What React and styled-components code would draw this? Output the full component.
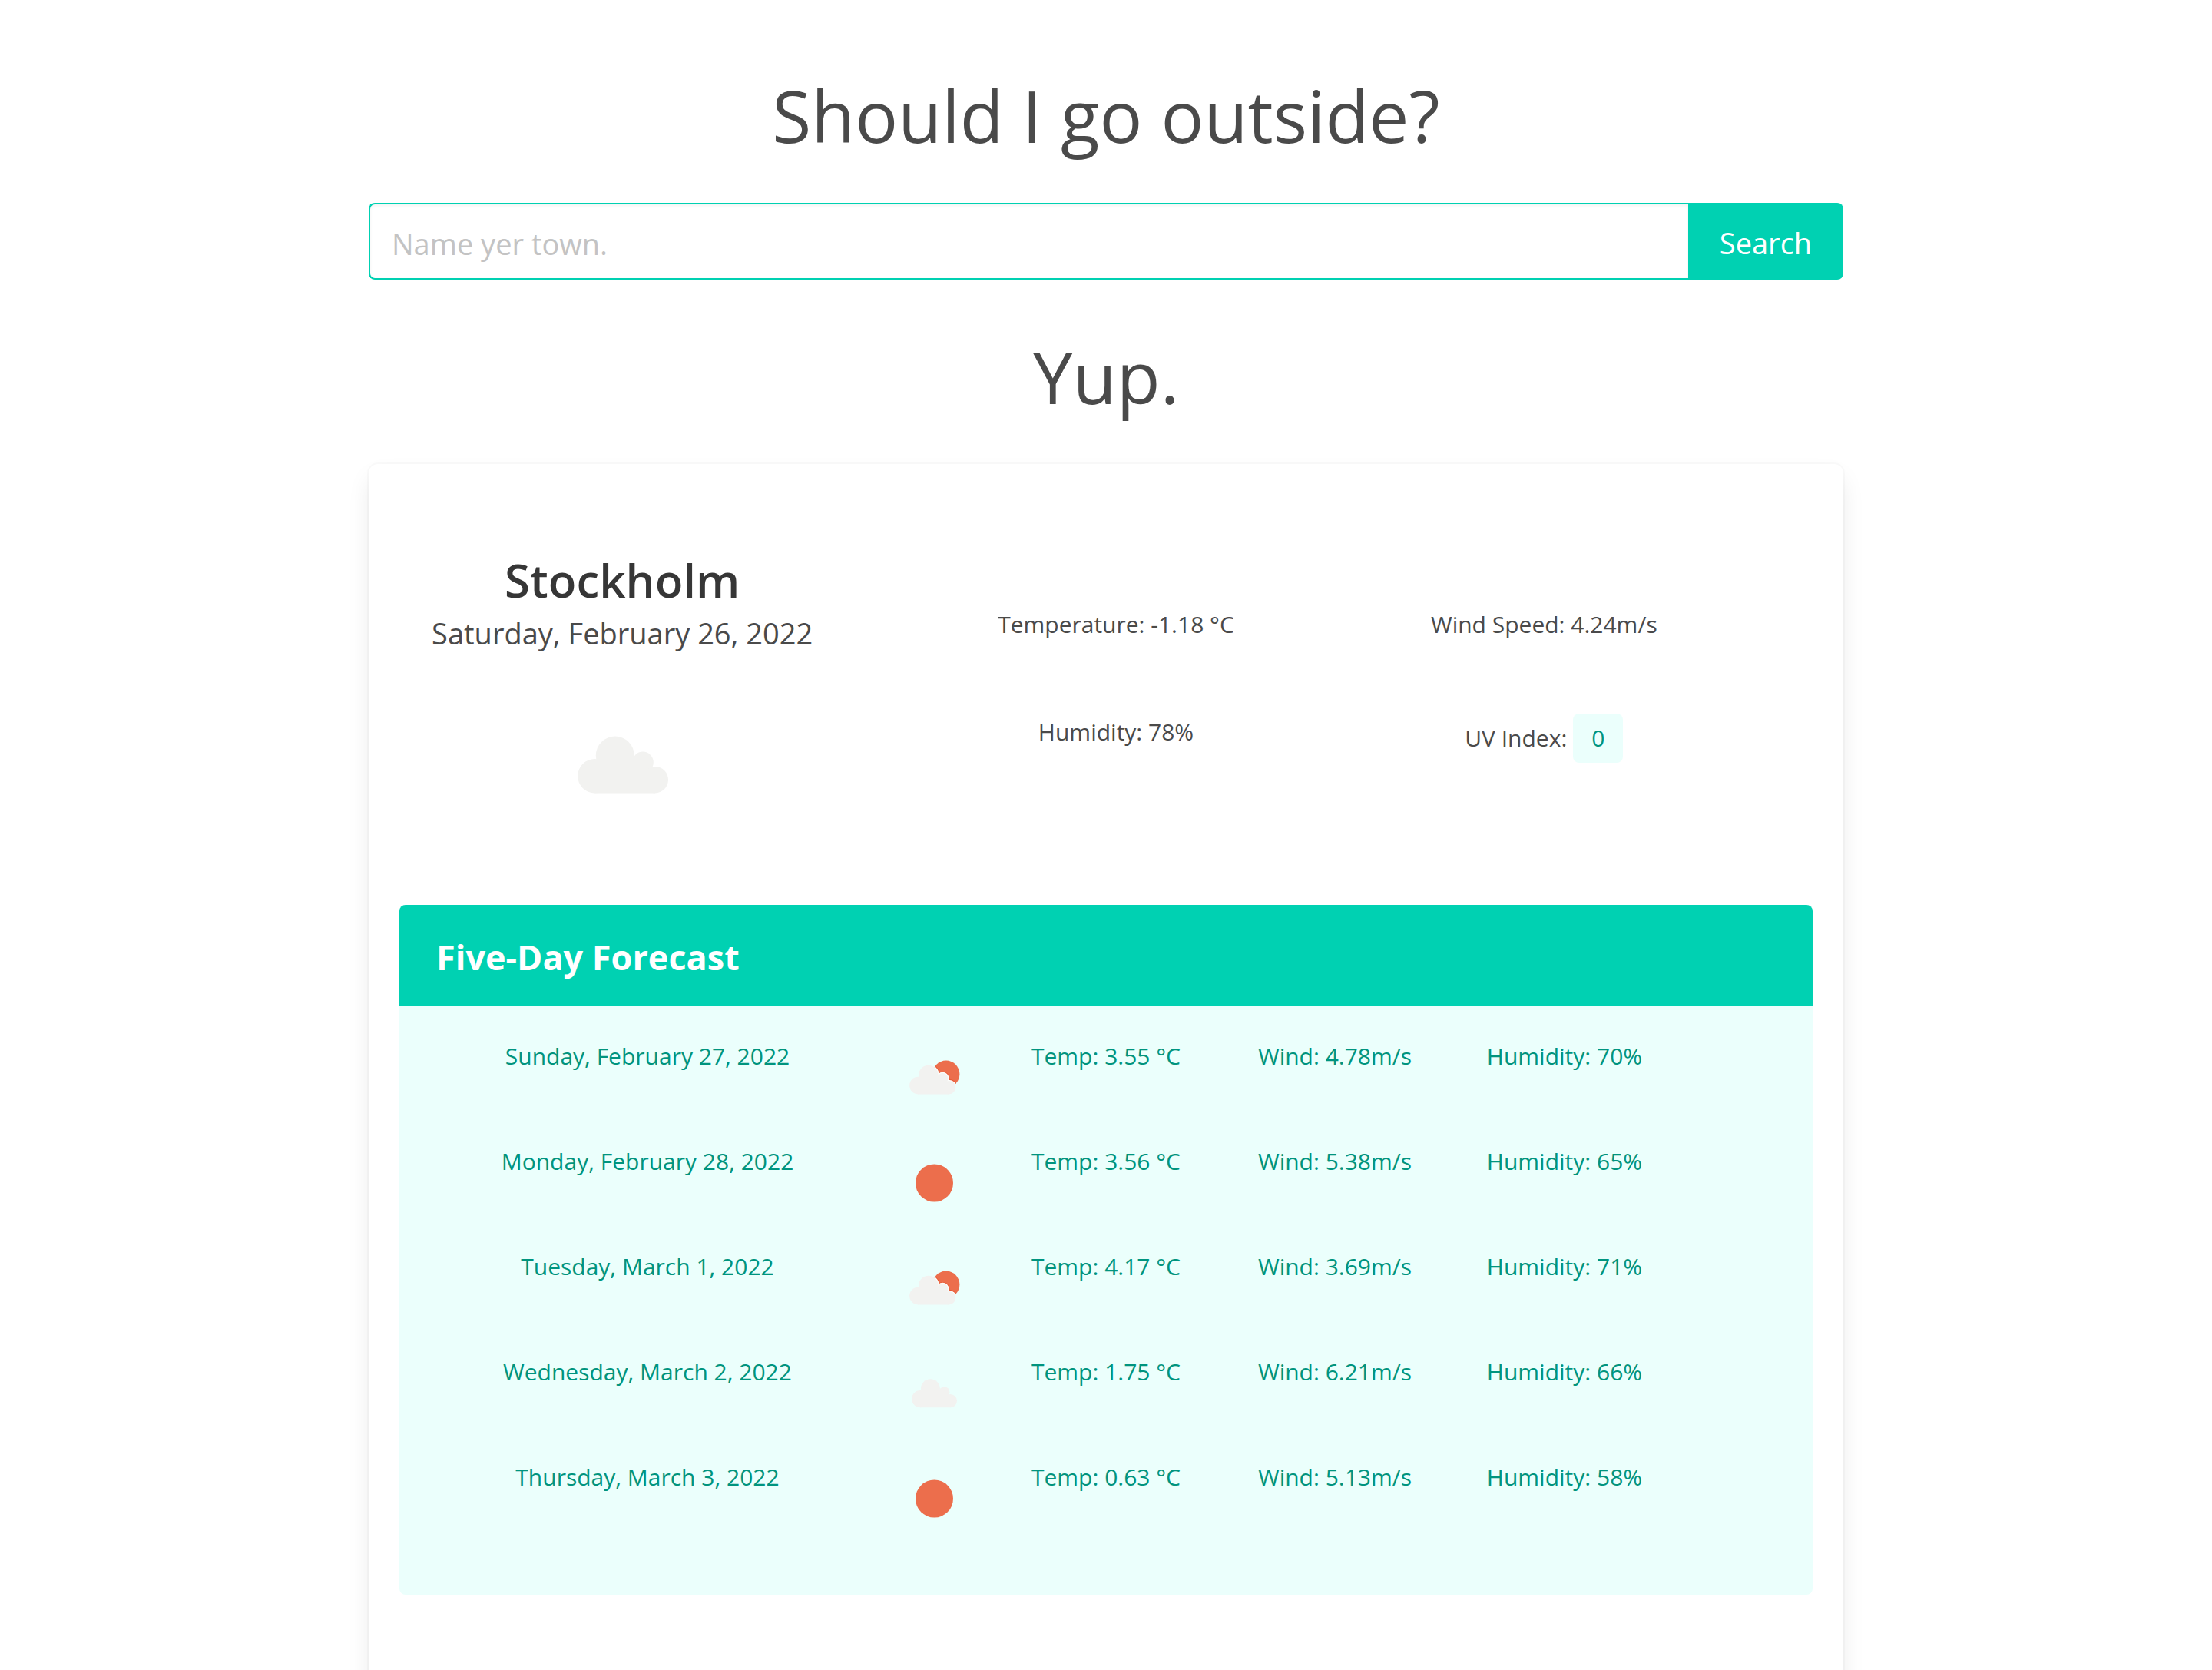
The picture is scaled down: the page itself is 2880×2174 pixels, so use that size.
import React, { useId } from "react";
import styled, { createGlobalStyle } from "styled-components";

const GlobalStyle = createGlobalStyle`
  *, *::before, *::after { box-sizing: border-box; }
  body {
    margin: 0;
    background: #fff;
    color: #4a4a4a;
    font-family: "Open Sans", "Noto Sans", sans-serif;
    font-size: 30px;
    line-height: 48px;
  }
  h1, h2, h3, p { margin: 0; }
`;

const Page = styled.main`
  width: 66.6667%;
  margin: 0 auto;
  padding: 96px 0 48px;
`;

const Headline = styled.p`
  font-size: 93px;
  line-height: 108px;
  text-align: center;
`;

const SearchForm = styled.form`
  display: flex;
  margin: 60px 0 72px;
`;

const TownInput = styled.input`
  flex: 1;
  min-width: 0;
  height: 100px;
  padding: 6px 28px 0;
  border: 2px solid #00d1b2;
  border-right: 0;
  border-radius: 8px 0 0 8px;
  background: #fff;
  box-shadow: inset 0 2px 4px rgba(10, 10, 10, 0.05);
  color: #363636;
  font: inherit;
  font-size: 38px;
  outline: none;
  &::placeholder { color: #c3c3c3; opacity: 1; }
`;

const SearchButton = styled.button`
  width: 202px;
  height: 100px;
  padding: 4px 0 0;
  border: 0;
  border-radius: 0 8px 8px 0;
  background: #00d1b2;
  color: #fff;
  font: inherit;
  font-size: 38px;
  cursor: pointer;
`;

const Card = styled.section`
  margin-top: 60px;
  padding: 40px 40px 128px;
  border-radius: 12px;
  background: #fff;
  box-shadow: 0 16px 32px -4px rgba(10, 10, 10, 0.1), 0 0 0 2px rgba(10, 10, 10, 0.02);
`;

const Today = styled.div`
  display: grid;
  grid-template-columns: 580fr 1114fr;
  column-gap: 74px;
  padding: 75px 71px 106px 0;
`;

const Place = styled.div`
  display: flex;
  flex-direction: column;
  align-items: center;
`;

const City = styled.h1`
  color: #363636;
  font-size: 60px;
  font-weight: 600;
  line-height: 72px;
`;

const TodayDate = styled.p`
  margin: 3px 0 38px;
  font-size: 38px;
  line-height: 60px;
`;

const Stats = styled.div`
  display: grid;
  grid-template-columns: 1fr 1fr;
  row-gap: 92px;
  align-content: start;
  padding-top: 70px;
  text-align: center;
`;

const Stat = styled.p`
  display: flex;
  justify-content: center;
  align-items: center;
  align-self: start;
  gap: 8px;
`;

const Tag = styled.span`
  padding: 8px 24px;
  border-radius: 8px;
  background: #ebfffc;
  color: #00947e;
`;

const Forecast = styled.article`
  overflow: hidden;
  border-radius: 8px;
  background: #ebfffc;
  color: #00947e;
`;

const ForecastTitle = styled.h2`
  padding: 38px 48px 34px;
  background: #00d1b2;
  color: #fff;
  font-size: 45px;
  font-weight: 700;
  line-height: 60px;
`;

const ForecastTable = styled.table`
  display: block;
  padding: 41px 0 40px;
  & tbody { display: block; }
`;

const Day = styled.tr`
  display: grid;
  grid-template-columns: 646fr 100fr 348fr 248fr 350fr 148fr;
  height: 137px;
`;

const DayName = styled.th`
  padding: 0;
  font-weight: 400;
  text-align: center;
`;

const Cell = styled.td`
  display: flex;
  justify-content: center;
  padding: 0;
  white-space: nowrap;
`;

const IconSvg = styled.svg`
  display: block;
  flex: none;
  width: ${(p) => p.$size}px;
  height: ${(p) => p.$size}px;
`;

function CloudShape(props) {
  return (
    <g {...props}>
      <circle cx="11.2" cy="25.9" r="11.1" />
      <circle cx="24.4" cy="12.6" r="12.5" />
      <circle cx="42.5" cy="17" r="6.9" />
      <circle cx="50.4" cy="28.4" r="8.6" />
      <path d="M11.2 16H46v6l4.4 6v9H11.2z" />
    </g>
  );
}

function WeatherIcon({ kind, size = 90 }) {
  const clip = useId();
  if (kind === "sun") {
    return (
      <IconSvg $size={size} viewBox="0 0 90 90" role="img" aria-label="Clear">
        <circle cx="45.5" cy="52" r="24.5" fill="#ec6e4c" />
      </IconSvg>
    );
  }
  if (kind === "cloud") {
    return (
      <IconSvg $size={size} viewBox="0 0 90 90" role="img" aria-label="Cloudy">
        <CloudShape transform="translate(16 33.2)" fill="#f2f2f0" />
      </IconSvg>
    );
  }
  return (
    <IconSvg $size={size} viewBox="0 0 90 90" role="img" aria-label="Partly cloudy">
      <clipPath id={clip}>
        <circle cx="60.8" cy="47.2" r="17.6" />
      </clipPath>
      <circle cx="60.8" cy="47.2" r="17.6" fill="#ec6e4c" />
      <g clipPath={`url(#${clip})`}>
        <CloudShape transform="translate(13 35.7) scale(1.02)" fill="none" stroke="#e65a35" strokeWidth="4" />
        <CloudShape transform="translate(13 35.7) scale(1.02)" fill="#fcfdfb" stroke="#fcfdfb" strokeWidth="2.4" />
      </g>
      <CloudShape transform="translate(13 35.7) scale(1.02)" fill="#f2f2f0" />
    </IconSvg>
  );
}

const days = [
  { date: "Sunday, February 27, 2022", icon: "partly", temp: "3.55", wind: "4.78", humidity: 70 },
  { date: "Monday, February 28, 2022", icon: "sun", temp: "3.56", wind: "5.38", humidity: 65 },
  { date: "Tuesday, March 1, 2022", icon: "partly", temp: "4.17", wind: "3.69", humidity: 71 },
  { date: "Wednesday, March 2, 2022", icon: "cloud", temp: "1.75", wind: "6.21", humidity: 66 },
  { date: "Thursday, March 3, 2022", icon: "sun", temp: "0.63", wind: "5.13", humidity: 58 },
];

export default function App() {
  return (
    <>
      <GlobalStyle />
      <Page>
        <Headline>Should I go outside?</Headline>
        <SearchForm onSubmit={(e) => e.preventDefault()}>
          <TownInput type="text" aria-label="Town" placeholder="Name yer town." />
          <SearchButton type="submit">Search</SearchButton>
        </SearchForm>
        <Headline>Yup.</Headline>
        <Card>
          <Today>
            <Place>
              <City>Stockholm</City>
              <TodayDate>Saturday, February 26, 2022</TodayDate>
              <WeatherIcon kind="cloud" size={180} />
            </Place>
            <Stats>
              <Stat>Temperature: -1.18 °C</Stat>
              <Stat>Wind Speed: 4.24m/s</Stat>
              <Stat>Humidity: 78%</Stat>
              <Stat>
                UV Index: <Tag>0</Tag>
              </Stat>
            </Stats>
          </Today>
          <Forecast>
            <ForecastTitle>Five-Day Forecast</ForecastTitle>
            <ForecastTable>
              <tbody>
                {days.map((d) => (
                  <Day key={d.date}>
                    <DayName scope="row">{d.date}</DayName>
                    <Cell>
                      <WeatherIcon kind={d.icon} />
                    </Cell>
                    <Cell>Temp: {d.temp} °C</Cell>
                    <Cell>Wind: {d.wind}m/s</Cell>
                    <Cell>Humidity: {d.humidity}%</Cell>
                  </Day>
                ))}
              </tbody>
            </ForecastTable>
          </Forecast>
        </Card>
      </Page>
    </>
  );
}
